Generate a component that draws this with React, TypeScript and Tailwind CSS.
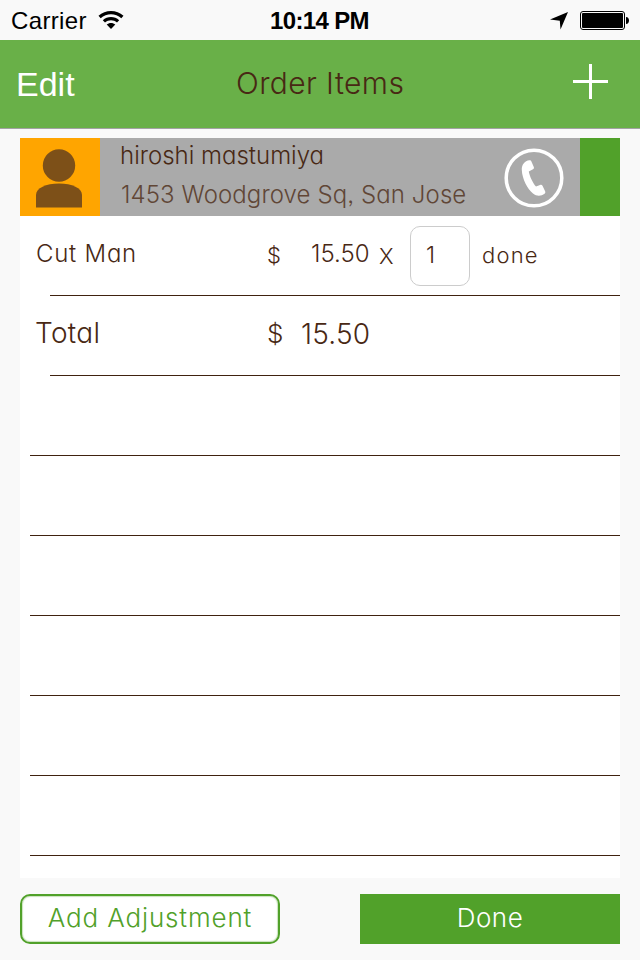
import type { ReactNode } from 'react';

const emptyRows = [0, 1, 2, 3, 4, 5];

function StatusBar() {
  return (
    <div className="flex h-10 items-start bg-[#f9f9f9] font-['Liberation_Sans',sans-serif] text-[24px] leading-[40px] text-black">
      <div className="flex w-[270px] pl-[11px]">
        <span className="w-[86px] pt-px tracking-[0.35px]">Carrier</span>
        <svg className="mt-[10px] h-[20px] w-[28px]" viewBox="0 0 28 20">
          <path d="M1.500 5.800C8.300-.7 19.700-.7 26.500 5.800L24.300 8.200C18.500 2.900 9.500 2.900 3.700 8.200Z" />
          <path d="M5.800 10.300C10.300 6 17.700 6 22.200 10.300L20 12.600C16.500 9.500 11.500 9.500 8 12.600Z" />
          <path d="M14 19L9.700 14.600C12 12.400 16 12.400 18.300 14.600Z" />
        </svg>
      </div>
      <span className="w-[100px] whitespace-nowrap pt-px font-bold tracking-[-0.65px]">10:14 PM</span>
      <div className="flex flex-1 pl-[180px]">
        <svg className="mt-[11px] h-[20px] w-[20px]" viewBox="0 0 20 20">
          <path d="M18 1L10.500 18.500L9.800 9.800L0 8.500Z" />
        </svg>
        <svg className="ml-[9px] mt-[10px] h-[21px] w-[51px]" viewBox="0 0 51 21">
          <rect x="1.500" y="1.500" width="44" height="18" rx="2.500" fill="none" stroke="#000" />
          <rect x="3" y="3" width="41" height="15" rx="1" />
          <path d="M47 7C51 7 51 14 47 14Z" />
        </svg>
      </div>
    </div>
  );
}

function Header() {
  return (
    <header className="flex h-[89px] items-start border-b border-[#a3a3a3] bg-[#69b048]">
      <span className="w-[236px] pl-[16px] pt-[24px] font-['Liberation_Sans',sans-serif] text-[34px] leading-[40px] text-white">Edit</span>
      <h1 className="w-[336px] whitespace-nowrap pt-[23px] text-[30px] leading-[40px] font-light tracking-[0.4px]">Order Items</h1>
      <svg className="mt-[23px] h-[37px] w-[37px]" viewBox="0 0 37 37">
        <path d="M1 18.500H36M18.500 1V36" stroke="#fff" strokeWidth="3" />
      </svg>
    </header>
  );
}

function Customer() {
  return (
    <section className="flex h-[78px] bg-[#aaaaaa]">
      <div className="w-20 bg-[#ffa500]">
        <svg className="h-[78px] w-[80px]" viewBox="0 0 80 78" fill="#7d5018">
          <circle cx="39" cy="27.500" r="16.200" />
          <path d="M16 69.500V57C16 50 26 45.500 39 45.500S62 50 62 57V69.500Z" />
        </svg>
      </div>
      <div className="w-[380px] whitespace-nowrap pl-5 pt-px text-[24px] font-light">
        <div className="h-[38px] leading-[34px]">hiroshi mastumiya</div>
        <div className="pl-px leading-[36px] tracking-[0.1px] text-[#604636]">1453 Woodgrove Sq, San Jose</div>
      </div>
      <svg className="h-[78px] w-[100px]" viewBox="0 0 100 78">
        <circle cx="54" cy="40" r="27.800" fill="none" stroke="#fff" strokeWidth="3.500" />
        <path d="M49.500 22.200C44.500 22.500 41.500 27 41.800 32C42.200 41 47.500 51 53 55.500C57 58.800 61.500 58 64.500 55.800C65.500 55 65.500 54 65 53L62.500 47.700C62 46.700 61 46.500 60 47L56 48.500C53 45.500 49.500 38 48.800 33.500L53 31.200C54 30.700 54.200 30 53.800 29L51.300 23.300C51 22.500 50.500 22.200 49.500 22.200Z" fill="#fff" />
      </svg>
      <div className="w-10 bg-[#51a12a]" />
    </section>
  );
}

function Row({ children, inset = false }: { children?: ReactNode; inset?: boolean }) {
  return (
    <div className="h-20">
      <div className="flex h-[79px] items-start whitespace-nowrap font-light">{children}</div>
      <div className={inset ? 'ml-[30px] h-px bg-[#40220f]' : 'ml-[10px] h-px bg-[#40220f]'} />
    </div>
  );
}

export default function App() {
  return (
    <main className="flex h-[960px] w-[640px] flex-col overflow-hidden bg-[#f9f9f9] font-['Inter','Liberation_Sans',sans-serif] text-[#482814] [font-feature-settings:'cv11','ss03']">
      <StatusBar />
      <Header />
      <div className="mx-5 mt-[9px] h-[740px] bg-white">
        <Customer />
        <Row inset>
          <span className="w-[247px] pl-[16px] pt-[18px] text-[24px] leading-[40px] tracking-[0.75px]">Cut Man</span>
          <span className="w-[44px] pt-[19px] text-[22px] leading-[40px]">$</span>
          <span className="w-[68px] pt-[18px] text-[24px] leading-[40px]">15.50</span>
          <span className="w-[31px] pt-[20px] text-[22px] leading-[40px]">X</span>
          <span className="mt-[10px] h-[60px] w-[60px] rounded-[10px] border border-[#cccccc] pl-[15px] pt-[8px] text-[23px] leading-[40px]">1</span>
          <span className="pl-[12px] pt-[19px] text-[22px] leading-[40px] tracking-[1.2px]">done</span>
        </Row>
        <Row inset>
          <span className="w-[247px] pl-[15px] pt-[17px] text-[28px] leading-[40px] tracking-[0.3px]">Total</span>
          <span className="w-[34px] pt-[18px] text-[26px] leading-[40px]">$</span>
          <span className="pt-[18px] text-[28px] leading-[40px] tracking-[0.2px]">15.50</span>
        </Row>
        {emptyRows.map((row) => (
          <Row key={row} />
        ))}
      </div>
      <footer className="mx-5 mt-4 flex justify-between text-[26px] leading-[44px] font-light">
        <button className="h-[50px] w-[260px] whitespace-nowrap rounded-[10px] border-2 border-[#51a12a] bg-white pb-[2px] tracking-[0.85px] text-[#51a12a] shadow-[inset_0_0_1px_1px_#c9e3bd]">Add Adjustment</button>
        <button className="h-[50px] w-[260px] bg-[#51a12a] pb-[2px] tracking-[0.5px] text-white">Done</button>
      </footer>
    </main>
  );
}
